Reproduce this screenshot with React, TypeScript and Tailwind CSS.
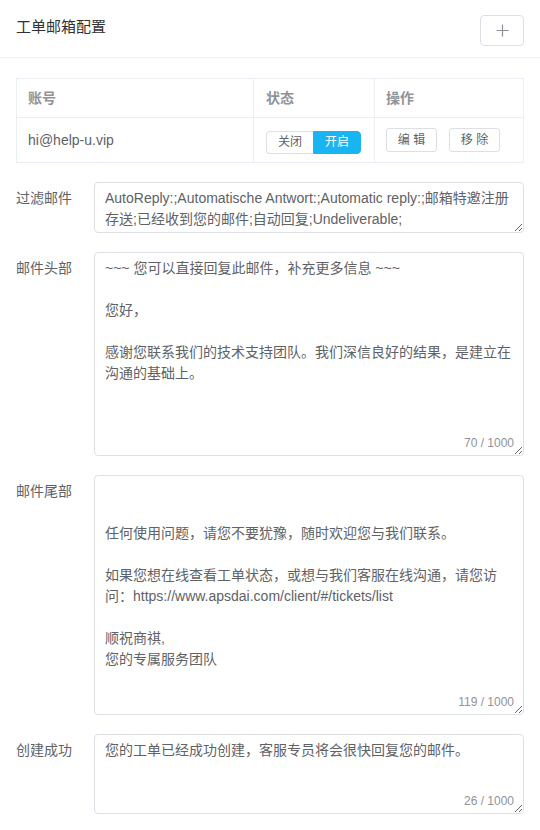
import { useState } from 'react';

const font = { fontFamily: '"Liberation Sans", "Noto Sans CJK SC", sans-serif' };

const fields = [
  {
    label: '过滤邮件',
    height: 'h-[51px]',
    value:
      'AutoReply:;Automatische Antwort:;Automatic reply:;邮箱特邀注册存送;已经收到您的邮件;自动回复;Undeliverable;',
    count: null,
  },
  {
    label: '邮件头部',
    height: 'h-[204px]',
    value:
      '~~~ 您可以直接回复此邮件，补充更多信息 ~~~\n\n您好，\n\n感谢您联系我们的技术支持团队。我们深信良好的结果，是建立在沟通的基础上。',
    count: '70 / 1000',
  },
  {
    label: '邮件尾部',
    height: 'h-[240px]',
    value:
      '\n\n任何使用问题，请您不要犹豫，随时欢迎您与我们联系。\n\n如果您想在线查看工单状态，或想与我们客服在线沟通，请您访问：https://www.apsdai.com/client/#/tickets/list\n\n顺祝商祺,\n您的专属服务团队',
    count: '119 / 1000',
  },
  {
    label: '创建成功',
    height: 'h-[80px]',
    value: '您的工单已经成功创建，客服专员将会很快回复您的邮件。',
    count: '26 / 1000',
  },
];

const App = () => {
  const [enabled, setEnabled] = useState(true);

  return (
    <div lang="zh-CN" className="min-h-screen bg-white text-[#606266]" style={font}>
      {/* header */}
      <div className="flex items-start justify-between px-4 pt-[15px] pb-[11px] border-b border-[#ebeef5]">
        <h2 className="text-[15px] leading-[23px] font-normal text-[#303133]">工单邮箱配置</h2>
        <button className="w-[44px] h-[31px] flex items-center justify-center border border-[#dcdfe6] rounded-[4px] bg-white">
          <svg width="13" height="13" viewBox="0 0 13 13">
            <path d="M6.5 0.5v12M0.5 6.5h12" stroke="#8c8f96" strokeWidth="1.2" fill="none" />
          </svg>
        </button>
      </div>

      <div className="px-4">
        {/* account table */}
        <div className="mt-5 border border-[#ebeef5] text-sm">
          <div className="grid grid-cols-[237px_121px_1fr] h-[39px] border-b border-[#ebeef5] font-bold text-[#909399]">
            <div className="flex items-center pl-[11px] border-r border-[#ebeef5]">账号</div>
            <div className="flex items-center pl-3 border-r border-[#ebeef5]">状态</div>
            <div className="flex items-center pl-[11px]">操作</div>
          </div>
          <div className="grid grid-cols-[237px_121px_1fr] h-[44px]">
            <div className="flex items-center pl-[11px] border-r border-[#ebeef5]">hi@help-u.vip</div>
            <div className="flex items-center pl-3 border-r border-[#ebeef5]">
              <div className="flex mt-1 text-xs">
                <button
                  onClick={() => setEnabled(false)}
                  className={`w-[47px] h-[23px] rounded-l-[4px] border ${
                    enabled ? 'border-[#dcdfe6] border-r-0 bg-white text-[#606266]' : 'border-[#19b4f2] bg-[#19b4f2] text-white'
                  }`}
                >
                  关闭
                </button>
                <button
                  onClick={() => setEnabled(true)}
                  className={`w-[48px] h-[23px] rounded-r-[4px] border ${
                    enabled ? 'border-[#19b4f2] bg-[#19b4f2] text-white' : 'border-[#dcdfe6] border-l-0 bg-white text-[#606266]'
                  }`}
                >
                  开启
                </button>
              </div>
            </div>
            <div className="flex items-center gap-3 pl-[11px] text-xs">
              <button className="w-[51px] h-6 border border-[#dcdfe6] rounded-[3px] bg-white">编 辑</button>
              <button className="w-[51px] h-6 border border-[#dcdfe6] rounded-[3px] bg-white">移 除</button>
            </div>
          </div>
        </div>

        {/* form */}
        <div className="mt-[19px] flex flex-col gap-[19px] pb-6">
          {fields.map((f) => (
            <div key={f.label} className="flex">
              <label className="w-[78px] shrink-0 text-sm leading-8">{f.label}</label>
              <div className="relative flex-1">
                <textarea
                  readOnly
                  spellCheck={false}
                  autoCorrect="off"
                  value={f.value}
                  className={`block w-full ${f.height} border border-[#dcdfe6] rounded-[4px] pl-[10px] pr-[8px] py-[5px] text-sm leading-[21px] text-[#606266] resize-y overflow-hidden outline-none`}
                  style={font}
                />
                {f.count && (
                  <span className="absolute right-[10px] bottom-[5px] text-xs text-[#909399] bg-white">
                    {f.count}
                  </span>
                )}
              </div>
            </div>
          ))}
        </div>
      </div>
    </div>
  );
};

export default App;
